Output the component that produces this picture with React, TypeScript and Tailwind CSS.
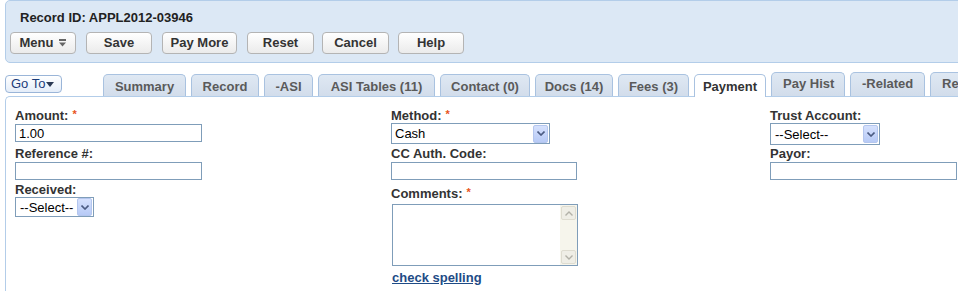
import React from 'react';

const tabs = [
  { label: 'Summary', w: 'w-[83px]' },
  { label: 'Record', w: 'w-[68px]' },
  { label: '-ASI', w: 'w-[49px]' },
  { label: 'ASI Tables (11)', w: 'w-[117px]' },
  { label: 'Contact (0)', w: 'w-[90px]' },
  { label: 'Docs (14)', w: 'w-[78px]' },
  { label: 'Fees (3)', w: 'w-[71px]' },
];

const laterTabs = [
  { label: 'Pay Hist', w: 'w-[74px]' },
  { label: '-Related', w: 'w-[75px]' },
  { label: 'Related Records', w: 'w-[120px]' },
];

function Star() {
  return <span className="ml-[4px] inline-block align-top text-[11px] leading-[13px] text-[#e8541c]">*</span>;
}

function Label({ children, req }: { children: React.ReactNode; req?: boolean }) {
  return (
    <div className="h-[15px] whitespace-nowrap text-[13px] font-bold leading-[15px] text-[#333]">
      {children}
      {req && <Star />}
    </div>
  );
}

function TextBox({ w, value, cls = '' }: { w: string; value?: string; cls?: string }) {
  return (
    <input
      readOnly
      defaultValue={value}
      className={`block h-[18px] ${w} ${cls} border border-[#7f9db9] bg-white px-[3px] text-[13px] leading-[16px] text-black outline-none`}
    />
  );
}

function ArrowBox() {
  return (
    <div className="flex h-[18px] w-[15px] items-center justify-center rounded-[2px] border border-[#b4c6ee] bg-gradient-to-b from-[#d6e1fd] to-[#b7caf6]">
      <svg width="8" height="5" viewBox="0 0 8 5">
        <path d="M0.5 0.5 L4 4 L7.5 0.5" fill="none" stroke="#4b5b82" strokeWidth="1.6" />
      </svg>
    </div>
  );
}

function SelectBox({ w, value, h = 'h-[21px]', pad = 'pl-[3px]' }: { w: string; value: string; h?: string; pad?: string }) {
  return (
    <div className={`flex ${h} ${w} items-center justify-between border border-[#7f9db9] bg-white ${pad} pr-[1px]`}>
      <span className="text-[13px] leading-[15px] text-black">{value}</span>
      <ArrowBox />
    </div>
  );
}

function Btn({ children, w, ml }: { children: React.ReactNode; w: string; ml: string }) {
  return (
    <div
      className={`flex h-[22px] ${w} ${ml} shrink-0 items-center justify-center rounded-[4px] border border-[#b4b4b4] bg-gradient-to-b from-white to-[#ebebeb] text-[13px] font-bold text-[#333]`}
    >
      {children}
    </div>
  );
}

function ScrollBtn({ up }: { up?: boolean }) {
  return (
    <div className="flex h-[14px] w-[15px] items-center justify-center rounded-[2px] border border-[#dedcd0] bg-[#efeee6]">
      <svg width="8" height="5" viewBox="0 0 8 5">
        <path d={up ? 'M0.5 4.5 L4 1 L7.5 4.5' : 'M0.5 0.5 L4 4 L7.5 0.5'} fill="none" stroke="#b2b1a8" strokeWidth="1.4" />
      </svg>
    </div>
  );
}

export default function App() {
  return (
    <div className="h-[291px] w-[958px] overflow-hidden bg-white font-['Liberation_Sans',Arial,sans-serif]">
      {/* header */}
      <div className="ml-[5px] h-[63px] w-[990px] rounded-[5px] border border-[#b3cde9] bg-[#dce8f5] pt-[9px]">
        <div className="h-[15px] pl-[14px] text-[13px] font-bold leading-[15px] text-[#222]">Record ID: APPL2012-03946</div>
        <div className="mt-[7px] flex pl-[4px]">
          <Btn w="w-[66px]" ml="ml-0">
            Menu
            <svg width="7" height="8" viewBox="0 0 7 8" className="ml-[6px]">
              <rect x="0" y="0" width="7" height="2" fill="#666" />
              <path d="M0 3.5 H7 L3.5 7.5 Z" fill="#666" />
            </svg>
          </Btn>
          <Btn w="w-[66px]" ml="ml-[10px]">Save</Btn>
          <Btn w="w-[75px]" ml="ml-[10px]">Pay More</Btn>
          <Btn w="w-[67px]" ml="ml-[10px]">Reset</Btn>
          <Btn w="w-[67px]" ml="ml-[8px]">Cancel</Btn>
          <Btn w="w-[66px]" ml="ml-[9px]">Help</Btn>
        </div>
      </div>

      {/* tab row */}
      <div className="flex h-[33px] items-end pl-[5px]">
        <div className="mb-[3px] flex h-[18px] w-[57px] shrink-0 items-center whitespace-nowrap rounded-[4px] border border-[#9ab5d8] bg-gradient-to-b from-white to-[#e4edf9] pl-[5px] text-[13px] text-[#1b3c7a]">
          Go To
          <svg width="8" height="5" viewBox="0 0 8 5" className="ml-[1px]">
            <path d="M0 0 H8 L4 5 Z" fill="#2b3a55" />
          </svg>
        </div>
        <div className="ml-[41px] flex shrink-0 items-end gap-[5px]">
          {tabs.map((t) => (
            <div
              key={t.label}
              className={`flex h-[22px] ${t.w} shrink-0 items-center justify-center whitespace-nowrap rounded-t-[5px] border border-b-0 border-[#a9c2e0] bg-gradient-to-b from-[#dfe8f3] to-[#d2ddeb] pt-[2px] text-[13px] font-bold text-[#5a5a5a]`}
            >
              {t.label}
            </div>
          ))}
          <div className="relative z-10 -mb-px flex h-[23px] w-[72px] shrink-0 items-center justify-center rounded-t-[5px] border border-b-0 border-[#a9c2e0] bg-white pt-[2px] text-[13px] font-bold text-[#333]">
            Payment
          </div>
          {laterTabs.map((t) => (
            <div
              key={t.label}
              className={`flex h-[24px] ${t.w} shrink-0 items-center justify-start whitespace-nowrap rounded-t-[5px] border border-b-0 border-[#a9c2e0] bg-gradient-to-b from-[#dfe8f3] to-[#d2ddeb] pb-[2px] pl-[11px] text-[13px] font-bold text-[#5a5a5a]`}
            >
              {t.label}
            </div>
          ))}
        </div>
      </div>

      {/* panel */}
      <div className="ml-[5px] h-[220px] w-[990px] rounded-tl-[5px] border-l border-t border-[#b3cde9] pl-[9px] pt-[11px]">
        <div className="grid grid-cols-[376px_379px_1fr]">
          <div>
            <Label req>Amount:</Label>
            <TextBox w="w-[187px]" value="1.00" cls="mt-[1px]" />
            <div className="mt-[4px]">
              <Label>Reference #:</Label>
            </div>
            <TextBox w="w-[187px]" cls="mt-[1px]" />
            <div className="mt-[2px]">
              <Label>Received:</Label>
            </div>
            <SelectBox w="w-[79px]" value="--Select--" h="h-[20px]" pad="pl-[4px]" />
          </div>

          <div>
            <Label req>Method:</Label>
            <SelectBox w="w-[159px]" value="Cash" />
            <div className="mt-[2px]">
              <Label>CC Auth. Code:</Label>
            </div>
            <TextBox w="w-[186px]" cls="mt-[1px]" />
            <div className="mt-[6px]">
              <Label req>Comments:</Label>
            </div>
            <div className="ml-[1px] mt-[3px] flex h-[62px] w-[186px] border border-[#7f9db9] bg-white">
              <div className="flex-1" />
              <div className="flex w-[17px] flex-col justify-between bg-[#f6f5ec] py-[1px] pl-[1px]">
                <ScrollBtn up />
                <ScrollBtn />
              </div>
            </div>
            <div className="ml-[1px] mt-[4px] text-[13px] font-bold leading-[15px] text-[#1e4b86] underline">check spelling</div>
          </div>

          <div>
            <Label>Trust Account:</Label>
            <SelectBox w="w-[110px]" value="--Select--" h="h-[22px]" pad="pl-[4px]" />
            <div className="mt-[1px]">
              <Label>Payor:</Label>
            </div>
            <TextBox w="w-[187px]" cls="mt-[1px]" />
          </div>
        </div>
      </div>
    </div>
  );
}
